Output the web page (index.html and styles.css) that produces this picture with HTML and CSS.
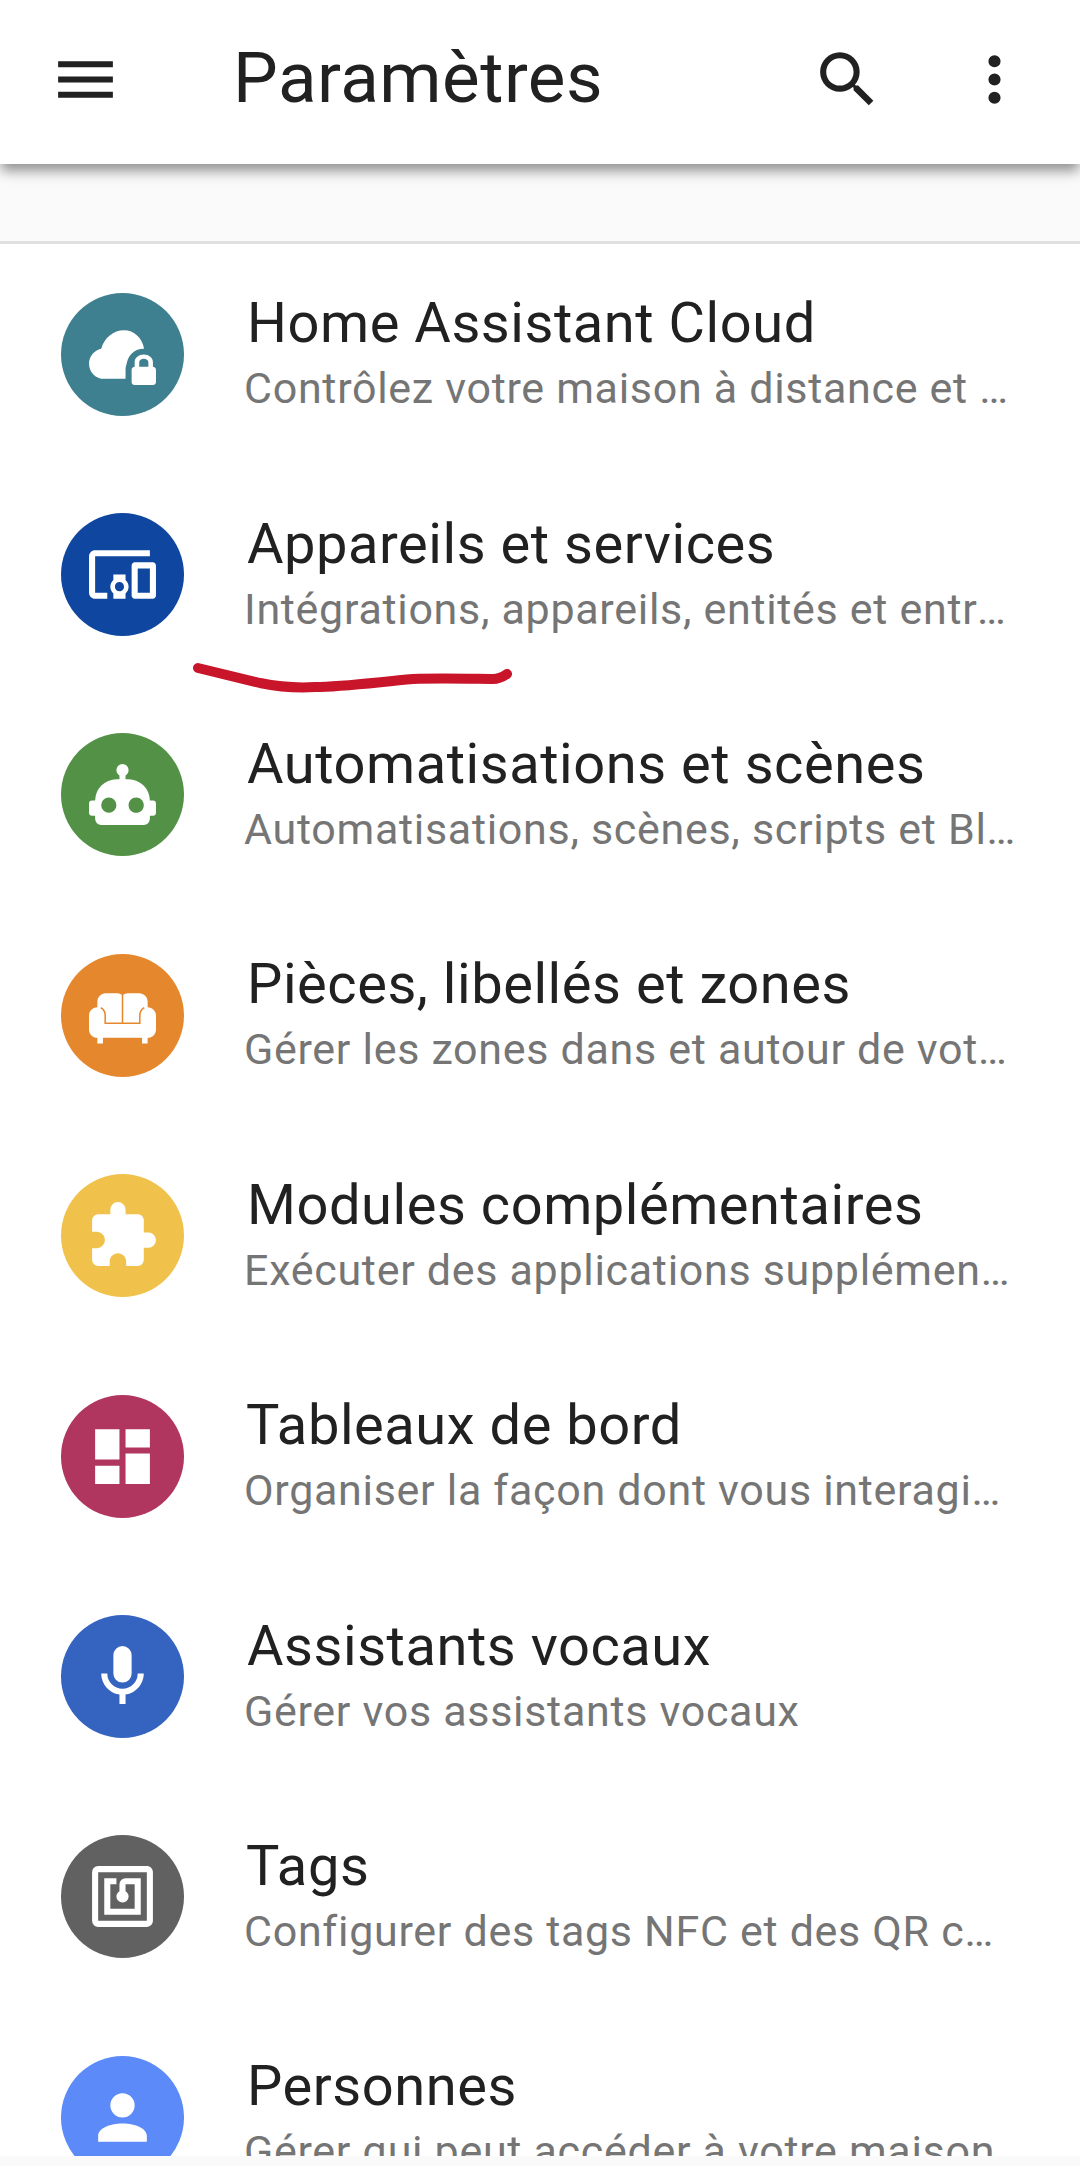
FILE: index.html
```html
<!DOCTYPE html>
<html lang="fr">

<head>
    <meta charset="UTF-8">
    <meta name="viewport" content="width=device-width, initial-scale=1.0">
    <title>Paramètres</title>
    <link rel="stylesheet" href="styles.css">
</head>

<body>
    <header class="topbar">
        <svg class="bar-icon" viewBox="0 0 24 24"><path d="M3,6H21V8H3V6M3,11H21V13H3V11M3,16H21V18H3V16Z"/></svg>
        <h1 class="topbar-title">Paramètres</h1>
        <svg class="bar-icon" viewBox="0 0 24 24"><path d="M9.5,3A6.5,6.5 0 0,1 16,9.5C16,11.11 15.41,12.59 14.44,13.73L14.71,14H15.5L20.5,19L19,20.5L14,15.5V14.71L13.73,14.44C12.59,15.41 11.11,16 9.5,16A6.5,6.5 0 0,1 3,9.5A6.5,6.5 0 0,1 9.5,3M9.5,5C7,5 5,7 5,9.5C5,12 7,14 9.5,14C12,14 14,12 14,9.5C14,7 12,5 9.5,5Z"/></svg>
        <svg class="bar-icon" viewBox="0 0 24 24"><path d="M12,16A2,2 0 0,1 14,18A2,2 0 0,1 12,20A2,2 0 0,1 10,18A2,2 0 0,1 12,16M12,10A2,2 0 0,1 14,12A2,2 0 0,1 12,14A2,2 0 0,1 10,12A2,2 0 0,1 12,10M12,4A2,2 0 0,1 14,6A2,2 0 0,1 12,8A2,2 0 0,1 10,6A2,2 0 0,1 12,4Z"/></svg>
    </header>

    <div class="band"></div>

    <main class="settings">
        <div class="row">
            <span class="badge badge-cloud">
                <svg viewBox="0 0 24 24"><path d="M6 20C3.2 20 1 17.8 1 15C1 12.6 2.7 10.6 5 10.1C6 6.5 9 4 12.5 4C15.8 4 18.5 6.5 19.1 10.1C16.2 10 14 12 13.5 14.5C13.3 15.5 13 16 13 17V20Z"/><path d="M22 16V14.5C22 13.1 20.6 12 19 12S16 13.1 16 14.5V16C15.45 16 15 16.45 15 17V21C15 21.55 15.45 22 16 22H22C22.55 22 23 21.55 23 21V17C23 16.45 22.55 16 22 16M20.5 16H17.5V14.5C17.5 13.9 18.2 13.4 19 13.4S20.5 13.9 20.5 14.5V16Z"/></svg>
            </span>
            <div class="row-text">
                <div class="row-title">Home Assistant Cloud</div>
                <div class="row-sub">Contrôlez votre maison à distance et intégrez des services</div>
            </div>
        </div>
        <div class="row">
            <span class="badge badge-devices">
                <svg viewBox="0 0 24 24"><path d="M3 6H21V4H3C1.9 4 1 4.9 1 6V18C1 19.1 1.9 20 3 20H7V18H3V6M13 12H9V13.78C8.39 14.33 8 15.11 8 16C8 16.89 8.39 17.67 9 18.22V20H13V18.22C13.61 17.67 14 16.88 14 16S13.61 14.33 13 13.78V12M11 17.5C10.17 17.5 9.5 16.83 9.5 16S10.17 14.5 11 14.5 12.5 15.17 12.5 16 11.83 17.5 11 17.5M22 8H16C15.5 8 15 8.5 15 9V19C15 19.5 15.5 20 16 20H22C22.5 20 23 19.5 23 19V9C23 8.5 22.5 8 22 8M21 18H17V10H21V18Z"/></svg>
            </span>
            <div class="row-text">
                <div class="row-title">Appareils et services</div>
                <div class="row-sub">Intégrations, appareils, entités et entrées</div>
            </div>
            <svg class="scribble" viewBox="0 0 330 40"><path d="M8 9L70 24C90 28 110 29 125 28C150 28 180 24 223 20C250 19 290 20 303 20C310 20 314 17 317 15"/></svg>
        </div>
        <div class="row">
            <span class="badge badge-auto">
                <svg viewBox="0 0 24 24"><path d="M12,2A2,2 0 0,1 14,4C14,4.74 13.6,5.39 13,5.73V7H14A7,7 0 0,1 21,14H22A1,1 0 0,1 23,15V18A1,1 0 0,1 22,19H21V20A2,2 0 0,1 19,22H5A2,2 0 0,1 3,20V19H2A1,1 0 0,1 1,18V15A1,1 0 0,1 2,14H3A7,7 0 0,1 10,7H11V5.73C10.4,5.39 10,4.74 10,4A2,2 0 0,1 12,2M7.5,13A2.5,2.5 0 0,0 5,15.5A2.5,2.5 0 0,0 7.5,18A2.5,2.5 0 0,0 10,15.5A2.5,2.5 0 0,0 7.5,13M16.5,13C15.12,13 14,14.12 14,15.5C14,16.88 15.12,18 16.5,18C17.88,18 19,16.88 19,15.5C19,14.12 17.88,13 16.5,13Z"/></svg>
            </span>
            <div class="row-text">
                <div class="row-title">Automatisations et scènes</div>
                <div class="row-sub">Automatisations, scènes, scripts et Blueprints</div>
            </div>
        </div>
        <div class="row">
            <span class="badge badge-areas">
                <svg viewBox="0 0 24 24"><path d="M6 4H10C10.77 4 11.47 4.3 12 4.78C12.53 4.3 13.23 4 14 4H18C19.65 4 21 5.35 21 7V9C22.65 9 24 10.35 24 12V17C24 18.65 22.65 20 21 20V22H19V20H5V22H3V20C1.35 20 0 18.65 0 17V12C0 10.35 1.35 9 3 9V7C3 5.35 4.35 4 6 4Z"/><path class="sofa-lines" d="M12 4V15M4.2 9.2C5.2 9.8 5.8 10.8 5.8 12V14.8H18.2V12C18.2 10.8 18.8 9.8 19.8 9.2"/></svg>
            </span>
            <div class="row-text">
                <div class="row-title">Pièces, libellés et zones</div>
                <div class="row-sub">Gérer les zones dans et autour de votre maison</div>
            </div>
        </div>
        <div class="row">
            <span class="badge badge-addons">
                <svg viewBox="0 0 24 24"><path d="M20.5,11H19V7C19,5.89 18.1,5 17,5H13V3.5A2.5,2.5 0 0,0 10.5,1A2.5,2.5 0 0,0 8,3.5V5H4A2,2 0 0,0 2,7V10.8H3.5C5,10.8 6.2,12 6.2,13.5C6.2,15 5,16.2 3.5,16.2H2V20A2,2 0 0,0 4,22H7.8V20.5C7.8,19 9,17.8 10.5,17.8C12,17.8 13.2,19 13.2,20.5V22H17A2,2 0 0,0 19,20V16H20.5A2.5,2.5 0 0,0 23,13.5A2.5,2.5 0 0,0 20.5,11Z"/></svg>
            </span>
            <div class="row-text">
                <div class="row-title">Modules complémentaires</div>
                <div class="row-sub">Exécuter des applications supplémentaires</div>
            </div>
        </div>
        <div class="row">
            <span class="badge badge-dash">
                <svg viewBox="0 0 24 24"><path d="M13,3V9H21V3M13,21H21V11H13M3,21H11V15H3M3,13H11V3H3V13Z"/></svg>
            </span>
            <div class="row-text">
                <div class="row-title row-title-t">Tableaux de bord</div>
                <div class="row-sub">Organiser la façon dont vous interagissez avec votre maison</div>
            </div>
        </div>
        <div class="row">
            <span class="badge badge-voice">
                <svg viewBox="0 0 24 24"><path d="M12,2A3,3 0 0,1 15,5V11A3,3 0 0,1 12,14A3,3 0 0,1 9,11V5A3,3 0 0,1 12,2M19,11C19,14.53 16.39,17.44 13,17.93V21H11V17.93C7.61,17.44 5,14.53 5,11H7A5,5 0 0,0 12,16A5,5 0 0,0 17,11H19Z"/></svg>
            </span>
            <div class="row-text">
                <div class="row-title">Assistants vocaux</div>
                <div class="row-sub">Gérer vos assistants vocaux</div>
            </div>
        </div>
        <div class="row">
            <span class="badge badge-tags">
                <svg viewBox="0 0 24 24"><path d="M18,6H13A2,2 0 0,0 11,8V10.28C10.41,10.62 10,11.26 10,12A2,2 0 0,0 12,14C12.74,14 13.39,13.6 13.73,13C13.9,12.7 14,12.37 14,12C14,11.26 13.6,10.62 13,10.28V8H16V16H8V8H10V6H8L6,6V18H18M20,20H4V4H20M20,2H4A2,2 0 0,0 2,4V20A2,2 0 0,0 4,22H20C21.1,22 22,21.1 22,20V4C22,2.89 21.1,2 20,2Z"/></svg>
            </span>
            <div class="row-text">
                <div class="row-title row-title-t">Tags</div>
                <div class="row-sub">Configurer des tags NFC et des QR codes</div>
            </div>
        </div>
        <div class="row">
            <span class="badge badge-people">
                <svg viewBox="0 0 24 24"><path d="M12,4A4,4 0 0,1 16,8A4,4 0 0,1 12,12A4,4 0 0,1 8,8A4,4 0 0,1 12,4M12,14C16.42,14 20,15.79 20,18V20H4V18C4,15.79 7.58,14 12,14Z"/></svg>
            </span>
            <div class="row-text">
                <div class="row-title">Personnes</div>
                <div class="row-sub">Gérer qui peut accéder à votre maison</div>
            </div>
        </div>
    </main>

    <div class="bottom-strip"></div>
</body>

</html>
```

FILE: styles.css
```css
html,
body {
    height: 100%;
}

body {
    margin: 0;
    background: #ffffff;
    color: #212121;
    font-family: 'Roboto', sans-serif;
    display: flex;
    flex-direction: column;
    overflow: hidden;
}

.topbar {
    box-sizing: border-box;
    height: 164px;
    flex: none;
    display: flex;
    align-items: center;
    gap: 74px;
    padding: 0 49px 6px 49px;
    background: #ffffff;
    box-shadow: 0 8px 12px -1px rgba(0, 0, 0, 0.42);
    position: relative;
    z-index: 2;
}

.bar-icon {
    width: 73px;
    height: 73px;
    flex: none;
    fill: #212121;
}

.topbar-title {
    flex: 1;
    margin: 0 0 4px 37px;
    font-size: 71px;
    font-weight: 400;
    letter-spacing: 0.5px;
}

.band {
    height: 77px;
    flex: none;
    background: #fafafa;
    border-bottom: 3px solid #e0e0e0;
}

.settings {
    flex: 1;
    min-height: 0;
    overflow: hidden;
}

.row {
    height: 220.4px;
    display: flex;
    align-items: center;
    position: relative;
    padding: 0 63px 0 61px;
}

.badge {
    width: 123px;
    height: 123px;
    flex: none;
    border-radius: 50%;
    display: flex;
    align-items: center;
    justify-content: center;
}

.badge svg {
    width: 73px;
    height: 73px;
    fill: #ffffff;
}

.badge-cloud { background: #3e808f; }
.badge-devices { background: #0f46a0; }
.badge-auto { background: #529146; }
.badge-areas { background: #e5882d; }
.badge-addons { background: #f1c24b; }
.badge-dash { background: #b0355f; }
.badge-voice { background: #3563c0; }
.badge-tags { background: #616161; }
.badge-people { background: #5c8af8; }

.badge-areas svg {
    width: 67px;
    height: 67px;
}

.badge .sofa-lines {
    fill: none;
    stroke: #e5882d;
    stroke-width: 0.55;
}

.row-text {
    flex: 1;
    min-width: 0;
    margin-left: 60px;
}

.row-title {
    font-size: 56px;
    line-height: 66px;
    margin-bottom: 2px;
    padding-left: 3px;
    letter-spacing: 0.55px;
}

.row-title-t {
    padding-left: 2px;
}

.row-sub {
    font-size: 43px;
    line-height: 60px;
    letter-spacing: 0.7px;
    color: #757575;
    white-space: nowrap;
    overflow: hidden;
    text-overflow: ellipsis;
}

.scribble {
    position: absolute;
    left: 190px;
    top: 195px;
    width: 330px;
    height: 40px;
    z-index: 1;
}

.scribble path {
    fill: none;
    stroke: #c8152a;
    stroke-width: 10;
    stroke-linecap: round;
    stroke-linejoin: round;
}

.bottom-strip {
    height: 10px;
    flex: none;
    background: #fafafa;
}
```
